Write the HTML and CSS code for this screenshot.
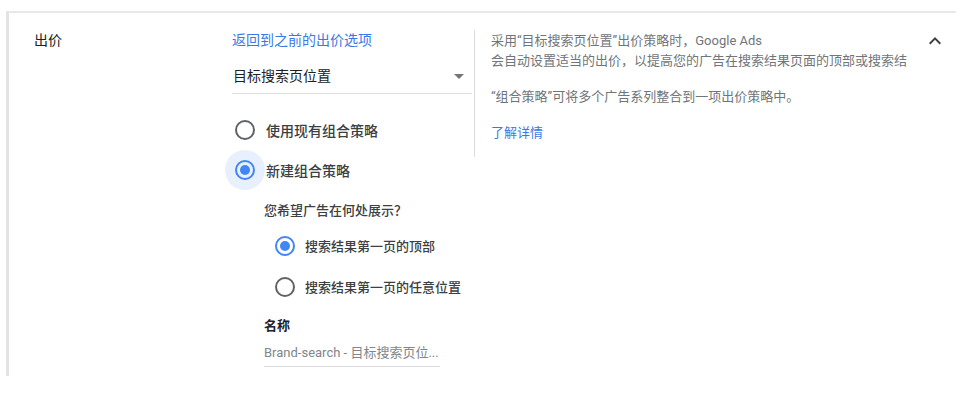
FILE: index.html
```html
<!DOCTYPE html>
<html lang="zh-CN">
<head>
  <meta charset="UTF-8">
  <title>出价</title>
  <link rel="stylesheet" href="styles.css">
</head>
<body>
<div class="card">
  <div class="label-col">出价</div>

  <div class="main-col">
    <a class="link" href="#">返回到之前的出价选项</a>

    <div class="select">
      <span>目标搜索页位置</span>
      <span class="arrow"></span>
    </div>

    <div class="radio-group">
      <div class="radio-row">
        <span class="radio"><span class="ring"></span></span>
        <span class="radio-label">使用现有组合策略</span>
      </div>
      <div class="radio-row">
        <span class="radio focused"><span class="ring checked"></span></span>
        <span class="radio-label">新建组合策略</span>
      </div>
    </div>

    <div class="sub">
      <div class="question">您希望广告在何处展示？</div>
      <div class="sub-row">
        <span class="radio"><span class="ring checked"></span></span>
        <span class="sub-label">搜索结果第一页的顶部</span>
      </div>
      <div class="sub-row">
        <span class="radio"><span class="ring"></span></span>
        <span class="sub-label">搜索结果第一页的任意位置</span>
      </div>

      <div class="field-title">名称</div>
      <div class="input">Brand-search - 目标搜索页位...</div>
    </div>
  </div>

  <div class="help-col">
    <div class="help-box">
      <p>采用“目标搜索页位置”出价策略时，Google Ads<br>会自动设置适当的出价，以提高您的广告在搜索结果页面的顶部或搜索结</p>
      <p>“组合策略”可将多个广告系列整合到一项出价策略中。</p>
      <a class="link small" href="#">了解详情</a>
    </div>
  </div>

  <div class="toggle">
    <svg width="24" height="24" viewBox="0 0 24 24"><path d="M12 8l-6 6 1.41 1.41L12 10.83l4.59 4.58L18 14z" fill="#3c4043"/></svg>
  </div>
</div>
</body>
</html>
```

FILE: styles.css
```css
* {
  margin: 0;
  padding: 0;
  box-sizing: border-box;
}

body {
  background: #fff;
  font-family: Roboto, "Noto Sans CJK SC", sans-serif;
  color: #202124;
  text-spacing-trim: space-all;
}

a {
  text-decoration: none;
}

.card {
  display: flex;
  width: 950px;
  height: 365px;
  margin: 11px 0 0 6px;
  border-top: 2px solid #e8e8e8;
  border-left: 3px solid #e3e3e3;
  padding-top: 17px;
}

.label-col {
  width: 223px;
  padding-left: 25px;
  font-size: 14px;
  line-height: 20px;
}

.main-col {
  width: 240px;
  margin-right: 2px;
}

.link {
  display: block;
  font-size: 14px;
  line-height: 20px;
  color: #3b78e7;
}

.link.small {
  font-size: 13px;
  display: inline-block;
}

.select {
  display: flex;
  justify-content: space-between;
  align-items: center;
  margin-top: 16px;
  padding: 0 8px 7px 1px;
  border-bottom: 1px solid #e0e0e0;
  font-size: 14px;
  line-height: 20px;
}

.arrow {
  width: 0;
  height: 0;
  border-left: 5px solid transparent;
  border-right: 5px solid transparent;
  border-top: 5px solid #757575;
}

.radio-group {
  margin-top: 16px;
  margin-left: -7px;
}

.radio-row,
.sub-row {
  display: flex;
  align-items: center;
  height: 40px;
}

.sub-row {
  height: 41px;
  margin-left: 1px;
}

.radio {
  display: flex;
  align-items: center;
  justify-content: center;
  width: 40px;
  height: 40px;
  border-radius: 50%;
}

.radio.focused {
  background: #e8f0fe;
}

.ring {
  width: 20px;
  height: 20px;
  border: 2px solid #5f6368;
  border-radius: 50%;
  display: flex;
  align-items: center;
  justify-content: center;
}

.ring.checked {
  border-color: #4285f4;
}

.ring.checked::after {
  content: "";
  width: 10px;
  height: 10px;
  border-radius: 50%;
  background: #4285f4;
}

.radio-label {
  margin-left: 1px;
  font-size: 14px;
  font-weight: 500;
  color: #3c4043;
}

.sub {
  margin-left: 32px;
  margin-top: 11px;
}

.question {
  font-size: 13px;
  line-height: 20px;
  font-weight: 500;
  color: #3c4043;
  margin-bottom: 4px;
}

.sub-label {
  font-size: 13px;
  font-weight: 500;
  color: #3c4043;
}

.field-title {
  margin-top: 9px;
  font-size: 13px;
  line-height: 20px;
  font-weight: 700;
}

.input {
  width: 176px;
  margin-top: 7px;
  padding-bottom: 3px;
  border-bottom: 1px solid #dadce0;
  font-size: 13px;
  line-height: 20px;
  color: #80868b;
  white-space: nowrap;
}

.help-col {
  flex: 1;
}

.help-box {
  height: 127px;
  border-left: 1px solid #dadce0;
  padding: 1px 0 0 16px;
  font-size: 13px;
  line-height: 20px;
  color: #70757a;
  white-space: nowrap;
}

.help-box p {
  margin-bottom: 16px;
}

.toggle {
  width: 24px;
  margin: -1px 9px 0 0;
}
```
